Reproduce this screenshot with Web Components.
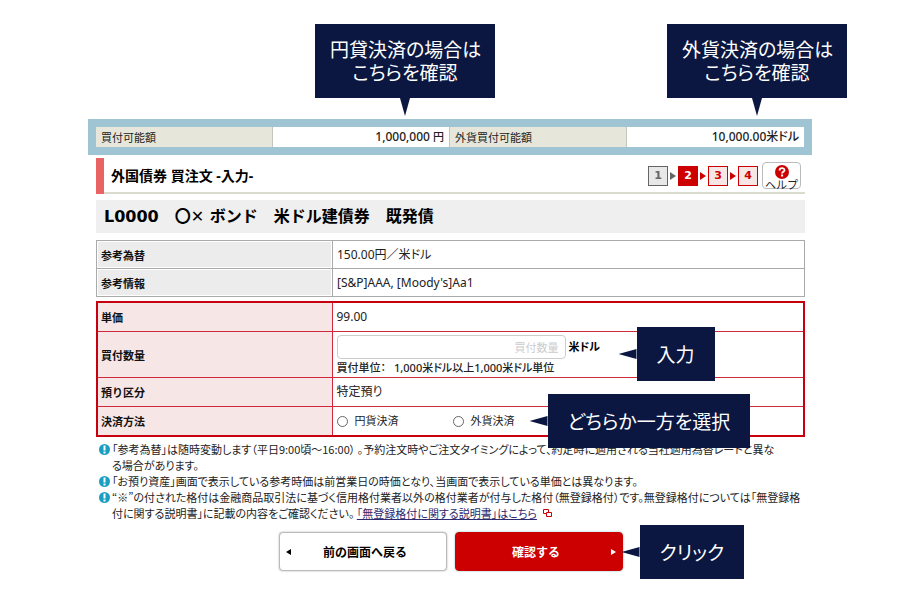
<!DOCTYPE html>
<html lang="ja">
<head>
<meta charset="utf-8">
<title>外国債券 買注文</title>
<style>
  body {
    margin: 0;
    background: #fff;
    color: #222;
    font-family: "Noto Sans", "Noto Sans CJK JP", sans-serif;
    font-size: 12px;
    font-feature-settings: "palt";
  }
</style>
</head>
<body>
<order-page></order-page>

<script>
class CallOut extends HTMLElement {
  constructor() {
    super();
    this.attachShadow({ mode: 'open' });
  }

  connectedCallback() {
    this.shadowRoot.innerHTML = `
      <style>
        :host {
          display: block;
          position: absolute;
          z-index: 2;
          box-sizing: border-box;
          padding: 13px 15px 15px;
          background: #0b1741;
          color: #fff;
          font: 19px/23px "Noto Sans CJK JP", sans-serif;
          font-feature-settings: "palt";
          text-align: center;
          white-space: nowrap;
        }
        :host([point="left"]) { padding: 15px 20px 16px; }
        .tip {
          position: absolute;
          background: #0b1741;
        }
        :host([point="down"]) .tip {
          top: 100%;
          left: calc(50% - 5px);
          width: 10px;
          height: 18px;
          clip-path: polygon(0 0, 100% 0, 50% 100%);
        }
        :host([point="left"]) .tip {
          right: 100%;
          top: calc(50% - 5px);
          width: 18px;
          height: 10px;
          clip-path: polygon(100% 0, 100% 100%, 0 50%);
        }
      </style>
      <slot></slot><span class="tip"></span>
    `;
  }
}
customElements.define('call-out', CallOut);

class BalanceBar extends HTMLElement {
  constructor() {
    super();
    this.attachShadow({ mode: 'open' });
  }

  connectedCallback() {
    this.shadowRoot.innerHTML = `
      <style>
        :host {
          display: block;
          padding: 8px;
          background: #9fc5d5;
        }
        dl {
          display: grid;
          grid-template-columns: repeat(4, 1fr);
          margin: 0;
          background: #fff;
          line-height: 20px;
        }
        dt, dd {
          position: relative;
          margin: 0;
          border-right: 1px solid #c5c5bb;
        }
        dt {
          padding-left: 5px;
          background: #e6e6da;
          font-size: 11px;
          font-family: "Noto Sans CJK JP", sans-serif;
        }
        dd {
          padding-right: 5px;
          text-align: right;
          font-size: 12px;
          font-weight: 500;
        }
        dd:last-child { border: 0; }
        small { font-size: 11px; }
        call-out {
          bottom: calc(100% + 29px);
          width: 180px;
        }
        .yen { right: -46px; }
        .fx { right: -43px; }
      </style>
      <dl>
        <dt>買付可能額</dt>
        <dd>1,000,000 <small>円</small>
          <call-out class="yen" point="down">円貸決済の場合は<br>こちらを確認</call-out></dd>
        <dt>外貨買付可能額</dt>
        <dd>10,000.00米ドル
          <call-out class="fx" point="down">外貨決済の場合は<br>こちらを確認</call-out></dd>
      </dl>
    `;
  }
}
customElements.define('balance-bar', BalanceBar);

class StepNav extends HTMLElement {
  constructor() {
    super();
    this.attachShadow({ mode: 'open' });
  }

  connectedCallback() {
    this.shadowRoot.innerHTML = `
      <style>
        :host { display: block; }
        ol {
          display: flex;
          align-items: center;
          margin: 0;
          padding: 0;
          list-style: none;
        }
        li {
          display: flex;
          align-items: center;
        }
        b {
          box-sizing: border-box;
          width: 20px;
          border: 1px solid #c00;
          background: #f7e6e6;
          color: #c00;
          font: bold 11px/18px "DejaVu Sans", sans-serif;
          text-align: center;
        }
        svg {
          width: 6px;
          height: 8px;
          margin: 0 2px;
          fill: #c00;
        }
        .done b { border-color: #666; background: #e8e8e8; color: #666; }
        .done svg { fill: #666; }
        .now b { background: #c00; color: #fff; }
      </style>
      <ol>${this.steps()}</ol>
    `;
  }

  steps() {
    const now = Number(this.getAttribute('now'));
    const total = Number(this.getAttribute('total'));
    let html = '';
    for (let i = 1; i <= total; i++) {
      const state = i < now ? 'done' : i === now ? 'now' : '';
      const arrow = i < total ? '<svg viewBox="0 0 6 8"><path d="M0 0l6 4-6 4z"/></svg>' : '';
      html += `<li class="${state}"><b>${i}</b>${arrow}</li>`;
    }
    return html;
  }
}
customElements.define('step-nav', StepNav);

class PageHead extends HTMLElement {
  constructor() {
    super();
    this.attachShadow({ mode: 'open' });
  }

  connectedCallback() {
    this.shadowRoot.innerHTML = `
      <style>
        :host {
          display: flex;
          align-items: stretch;
        }
        .bar {
          width: 8px;
          background: #e96363;
        }
        .inner {
          flex: 1;
          display: flex;
          align-items: center;
          gap: 4px;
          padding: 4px 4px 3px 7px;
          border-bottom: 2px solid #dadacd;
        }
        h1 {
          flex: 1;
          margin: 0;
          color: #000;
          font-size: 14px;
          line-height: 20px;
        }
        button {
          display: flex;
          flex-direction: column;
          align-items: center;
          width: 39px;
          height: 27px;
          padding: 2px 0 0;
          border: 1px solid #bbb;
          border-radius: 4px;
          background: #fff;
          color: #222;
          font: 11px/10px "Noto Sans CJK JP", sans-serif;
        }
        button svg { flex: none; width: 14px; height: 14px; }
      </style>
      <span class="bar"></span>
      <div class="inner">
        <h1><slot></slot></h1>
        <step-nav now="2" total="4"></step-nav>
        <button type="button">
          <svg viewBox="0 0 14 14"><circle cx="7" cy="7" r="7" fill="#c00"/><path d="M4.6 5.4c0-3 4.9-3 4.9-.2 0 1.7-2.4 1.6-2.4 3.2" fill="none" stroke="#fff" stroke-width="1.8"/><rect x="6.1" y="9.5" width="2" height="2" fill="#fff"/></svg>
          ヘルプ
        </button>
      </div>
    `;
  }
}
customElements.define('page-head', PageHead);

class InfoTable extends HTMLElement {
  constructor() {
    super();
    this.attachShadow({ mode: 'open' });
  }

  connectedCallback() {
    this.shadowRoot.innerHTML = `
      <style>
        :host { display: block; }
        table {
          width: 100%;
          border-collapse: collapse;
          border: 1px solid #aaa;
          table-layout: fixed;
        }
        th, td {
          height: 27px;
          padding: 0 4px;
          border: 1px solid #aaa;
          text-align: left;
          line-height: 18px;
        }
        th {
          box-sizing: border-box;
          width: 236px;
          background: #ececec;
          box-shadow: inset 0 0 0 1px #fff;
          color: #111;
          font: bold 11px/18px "Noto Sans CJK JP", sans-serif;
        }
      </style>
      <table>
        <tr><th scope="row">参考為替</th><td>150.00円／米ドル</td></tr>
        <tr><th scope="row">参考情報</th><td>[S&amp;P]AAA, [Moody's]Aa1</td></tr>
      </table>
    `;
  }
}
customElements.define('info-table', InfoTable);

class OrderForm extends HTMLElement {
  constructor() {
    super();
    this.attachShadow({ mode: 'open' });
  }

  connectedCallback() {
    this.shadowRoot.innerHTML = `
      <style>
        :host { display: block; }
        table {
          width: 100%;
          border-collapse: collapse;
          border: 2px solid #c7000f;
          table-layout: fixed;
        }
        th, td {
          height: 28px;
          padding: 0 4px;
          border: 1px solid #d0283c;
          text-align: left;
          line-height: 18px;
        }
        th {
          box-sizing: border-box;
          width: 235px;
          padding: 0 3px;
          background: #f7e6e6;
          background-clip: padding-box;
          color: #111;
          font: bold 11px/18px "Noto Sans CJK JP", sans-serif;
        }
        .cell { position: relative; }
        .amount {
          display: flex;
          align-items: center;
          gap: 3px;
          padding-top: 3px;
          color: #000;
          font-weight: bold;
          font-size: 11px;
        }
        input[type="text"] {
          box-sizing: border-box;
          width: 229px;
          height: 24px;
          padding: 0 6px;
          border: 1px solid #ccc;
          border-radius: 4px;
          font: 11px "Noto Sans CJK JP", sans-serif;
          text-align: right;
        }
        input::placeholder { color: #ccc; }
        .unit { display: flex; gap: 8px; font-size: 11px; font-weight: 500; }
        .choices {
          display: grid;
          grid-template-columns: 116px 1fr;
          font-size: 11px;
        }
        label { display: flex; align-items: center; gap: 7px; }
        input[type="radio"] {
          appearance: none;
          width: 11px;
          height: 11px;
          margin: 0;
          border: 1px solid #666;
          border-radius: 50%;
          background: #fff;
        }
        input[type="radio"]:checked { background: #c00; box-shadow: inset 0 0 0 2px #fff; }
        .enter { left: 300px; top: -5px; }
        .choose { left: 211px; top: -18px; }
      </style>
      <form>
        <table>
          <tr><th scope="row">単価</th><td>99.00</td></tr>
          <tr>
            <th scope="row"><label for="qty">買付数量</label></th>
            <td>
              <div class="cell">
                <div class="amount"><input type="text" id="qty" placeholder="買付数量">米ドル</div>
                <div class="unit"><span>買付単位：</span><span>1,000米ドル以上1,000米ドル単位</span></div>
                <call-out class="enter" point="left">入力</call-out>
              </div>
            </td>
          </tr>
          <tr><th scope="row">預り区分</th><td>特定預り</td></tr>
          <tr>
            <th scope="row">決済方法</th>
            <td>
              <div class="cell choices" role="radiogroup" aria-label="決済方法">
                <label><input type="radio" name="pay" value="jpy">円貨決済</label>
                <label><input type="radio" name="pay" value="fx">外貨決済</label>
                <call-out class="choose" point="left">どちらか一方を選択</call-out>
              </div>
            </td>
          </tr>
        </table>
      </form>
    `;
  }
}
customElements.define('order-form', OrderForm);

class NoteItem extends HTMLElement {
  constructor() {
    super();
    this.attachShadow({ mode: 'open' });
  }

  connectedCallback() {
    this.shadowRoot.innerHTML = `
      <style>
        :host {
          display: flex;
          gap: 2px;
          font: 11px/16px "Noto Sans CJK JP", sans-serif;
          font-feature-settings: "palt";
        }
        svg { flex: none; width: 11px; height: 11px; margin-top: 3px; }
        p { flex: 1; margin: 0; }
      </style>
      <svg viewBox="0 0 11 11"><circle cx="5.5" cy="5.5" r="5.5" fill="#1b9fc0"/><path d="M4.5 1.5h2v5h-2zM4.5 7.5h2v2h-2z" fill="#fff"/></svg>
      <p><slot></slot></p>
    `;
  }
}
customElements.define('note-item', NoteItem);

class ActionBar extends HTMLElement {
  constructor() {
    super();
    this.attachShadow({ mode: 'open' });
  }

  connectedCallback() {
    this.shadowRoot.innerHTML = `
      <style>
        :host {
          display: flex;
          justify-content: center;
          gap: 8px;
        }
        .wrap { position: relative; }
        button {
          display: flex;
          align-items: center;
          width: 168px;
          height: 39px;
          padding: 0 6px;
          border: 1px solid #bbb;
          border-radius: 4px;
          background: #fff;
          box-shadow: 0 0 2px #aaa;
          color: #000;
          font: bold 12px/18px "Noto Sans CJK JP", sans-serif;
        }
        button span { flex: 1; }
        button.go { border-color: #c00; background: #c00; color: #fff; box-shadow: 0 0 2px #7bb; }
        svg { width: 5px; height: 6px; fill: currentColor; }
        call-out { left: calc(100% + 17px); top: -7px; }
      </style>
      <button type="button"><svg viewBox="0 0 5 6"><path d="M5 0L0 3l5 3z"/></svg><span>前の画面へ戻る</span></button>
      <div class="wrap">
        <button type="button" class="go"><span>確認する</span><svg viewBox="0 0 5 6"><path d="M0 0l5 3-5 3z"/></svg></button>
        <call-out point="left">クリック</call-out>
      </div>
    `;
  }
}
customElements.define('action-bar', ActionBar);

class OrderPage extends HTMLElement {
  constructor() {
    super();
    this.attachShadow({ mode: 'open' });
  }

  connectedCallback() {
    this.shadowRoot.innerHTML = `
      <style>
        :host {
          display: block;
          padding: 119px 88px 16px;
        }
        main { padding: 3px 7px 0 8px; }
        h2 {
          margin: 6px 0 7px;
          padding: 0 8px;
          background: #efefef;
          color: #000;
          font: bold 16px/33px "DejaVu Sans", "Noto Sans CJK JP", sans-serif;
          white-space: pre;
        }
        order-form { margin-top: 4px; }
        .notes { padding: 4px 0 0 3px; }
        a { color: #2d2a6e; }
        .ext { margin-left: 6px; }
        action-bar { margin-top: 11px; }
      </style>
      <balance-bar></balance-bar>
      <main>
        <page-head>外国債券 買注文 -入力-</page-head>
        <h2>L0000　〇✕ ボンド　米ドル建債券　既発債</h2>
        <info-table></info-table>
        <order-form></order-form>
        <div class="notes">
          <note-item>「参考為替」は随時変動します（平日9:00頃～16:00） 。予約注文時やご注文タイミングによって、約定時に適用される当社適用為替レートと異な<br>る場合があります。</note-item>
          <note-item>「お預り資産」画面で表示している参考時価は前営業日の時価となり、当画面で表示している単価とは異なります。</note-item>
          <note-item>“※”の付された格付は金融商品取引法に基づく信用格付業者以外の格付業者が付与した格付（無登録格付）です。無登録格付については「無登録格<br>付に関する説明書」に記載の内容をご確認ください。 <a href="#">「無登録格付に関する説明書」はこちら</a><svg class="ext" width="9" height="9" viewBox="0 0 9 9" fill="#fff" stroke="#c00"><path d="M.5.5h5v4h-5z"/><path d="M3.5 3.5h5v4h-5z"/></svg></note-item>
        </div>
        <action-bar></action-bar>
      </main>
    `;
  }
}
customElements.define('order-page', OrderPage);
</script>
</body>
</html>
